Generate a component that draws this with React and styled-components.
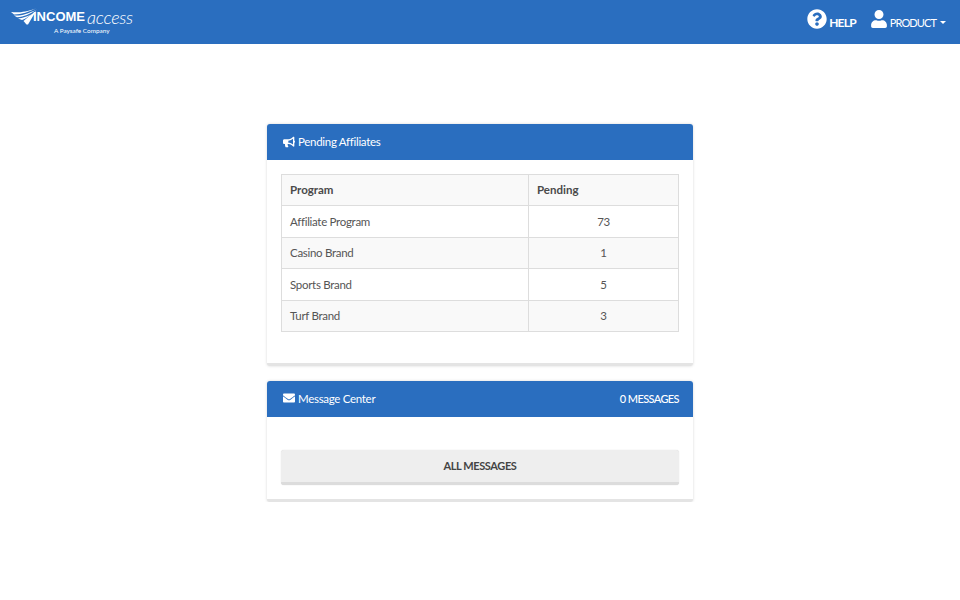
import React from 'react';
import styled, { createGlobalStyle } from 'styled-components';
import { FaQuestionCircle, FaUser, FaBullhorn, FaEnvelope } from 'react-icons/fa';

const Global = createGlobalStyle`
  html, body { margin: 0; padding: 0; background: #fff; }
  body { font-family: Lato, "Noto Sans", sans-serif; color: #555; }
`;

const Navbar = styled.header`
  height: 44px;
  background: #2a6ebf;
  display: flex;
  justify-content: space-between;
  align-items: flex-start;
  color: #fff;
`;

const Logo = styled.div`
  display: flex;
  flex-direction: column;
  padding: 7px 0 0 11px;
  width: 124px;
`;

const LogoTop = styled.div`
  display: flex;
  align-items: center;
  height: 19px;
  white-space: nowrap;
`;

const LogoBold = styled.span`
  font-family: "Liberation Sans", sans-serif;
  font-weight: 700;
  font-size: 13px;
  line-height: 14px;
  margin-left: -8px;
`;

const LogoThin = styled.span`
  font-style: italic;
  font-weight: 300;
  font-size: 18px;
  line-height: 18px;
  margin-left: 2px;
  letter-spacing: -0.3px;
`;

const LogoTag = styled.div`
  font-size: 6.4px;
  line-height: 9px;
  margin: 0 0 0 43px;
  white-space: nowrap;
`;

const NavLinks = styled.nav`
  display: flex;
  align-items: flex-start;
  gap: 14px;
  padding: 9px 14px 0 0;
`;

const NavItem = styled.div`
  display: flex;
  align-items: center;
  height: 20px;
  gap: 2px;
  font-size: ${({ $bold }) => ($bold ? 12 : 11)}px;
  font-weight: ${({ $bold }) => ($bold ? 700 : 400)};
  letter-spacing: ${({ $bold }) => ($bold ? -0.8 : -0.9)}px;
  svg { font-size: ${({ $icon }) => $icon}px; flex: none; }
  span { position: relative; top: 3px; }
`;

const Caret = styled.i`
  display: inline-block;
  width: 0;
  height: 0;
  margin: 6px 0 0 2px;
  border-top: 3.5px solid #fff;
  border-left: 3.5px solid transparent;
  border-right: 3.5px solid transparent;
`;

const Main = styled.main`
  width: 426px;
  margin: 80px auto 0;
  display: flex;
  flex-direction: column;
  gap: 15px;
`;

const Panel = styled.section`
  background: #fff;
  border-radius: 3px;
  box-shadow: 0 0 3px rgba(0, 0, 0, 0.16);
  border-bottom: 3px solid #e4e4e4;
`;

const PanelHead = styled.div`
  height: 36px;
  box-sizing: border-box;
  background: #2a6ebf;
  border-radius: 3px 3px 0 0;
  color: #fff;
  display: flex;
  align-items: center;
  justify-content: space-between;
  padding: 0 14px 1px 16px;
  font-size: 11.5px;
  letter-spacing: -0.3px;
`;

const HeadTitle = styled.div`
  display: flex;
  align-items: center;
  gap: 3px;
  svg { font-size: 12px; }
`;

const MessageCount = styled.span`
  font-size: 11px;
  font-weight: 500;
  letter-spacing: -0.6px;
`;

const PanelBody = styled.div`
  padding: ${({ $top }) => $top}px 14px ${({ $bottom }) => $bottom}px;
`;

const Table = styled.table`
  width: 100%;
  border-collapse: collapse;
  table-layout: fixed;
  font-size: 11.5px;
  letter-spacing: -0.3px;
`;

const Row = styled.tr`
  height: 31.5px;
  background: ${({ $striped }) => ($striped ? '#f9f9f9' : '#fff')};
`;

const Head = styled.th`
  border: 1px solid #ddd;
  padding: 0 8px;
  text-align: left;
  font-weight: 700;
  letter-spacing: 0;
  color: #4a4a4a;
  width: ${({ $w }) => $w || 'auto'};
`;

const Cell = styled.td`
  border: 1px solid #ddd;
  padding: 0 8px;
  text-align: ${({ $center }) => ($center ? 'center' : 'left')};
`;

const WideButton = styled.button`
  display: block;
  width: 100%;
  height: 35px;
  border: 0;
  border-bottom: 3px solid #dcdcdc;
  border-radius: 3px;
  background: #eee;
  box-shadow: 0 0 1px rgba(0, 0, 0, 0.2);
  color: #444;
  font-family: inherit;
  font-size: 11px;
  font-weight: 700;
  letter-spacing: -0.4px;
  padding: 0;
`;

const rows = [
  ['Affiliate Program', 73],
  ['Casino Brand', 1],
  ['Sports Brand', 5],
  ['Turf Brand', 3],
];

const Wing = () => (
  <svg width="30" height="17" viewBox="0 0 30 17" fill="#fff">
    <path d="M0 4C8 5 14 4 25 0.5C18 4 10 6.5 3 6.4Z" />
    <path d="M3 7.4C10 8 16 6 26 1.5C19 6 13 9 6 9.2Z" />
    <path d="M7 10.4C12 10.2 16 8.5 20 6.5C17 9 14.5 11 11 12Z" />
    <path d="M12.5 13L18 8.2L25 3L17 16.5H15.5Z" />
  </svg>
);

export default function App() {
  return (
    <>
      <Global />
      <Navbar>
        <Logo>
          <LogoTop>
            <Wing />
            <LogoBold>INCOME</LogoBold>
            <LogoThin>access</LogoThin>
          </LogoTop>
          <LogoTag>A Paysafe Company</LogoTag>
        </Logo>
        <NavLinks>
          <NavItem $bold $icon={20}>
            <FaQuestionCircle />
            <span>HELP</span>
          </NavItem>
          <NavItem $icon={18}>
            <FaUser />
            <span>PRODUCT</span>
            <Caret />
          </NavItem>
        </NavLinks>
      </Navbar>
      <Main>
        <Panel>
          <PanelHead>
            <HeadTitle>
              <FaBullhorn />
              Pending Affiliates
            </HeadTitle>
          </PanelHead>
          <PanelBody $top={13.5} $bottom={30.5}>
            <Table>
              <thead>
                <Row $striped>
                  <Head $w="230px">Program</Head>
                  <Head>Pending</Head>
                </Row>
              </thead>
              <tbody>
                {rows.map(([name, count], i) => (
                  <Row key={name} $striped={i % 2 === 1}>
                    <Cell>{name}</Cell>
                    <Cell $center>{count}</Cell>
                  </Row>
                ))}
              </tbody>
            </Table>
          </PanelBody>
        </Panel>
        <Panel>
          <PanelHead>
            <HeadTitle>
              <FaEnvelope />
              Message Center
            </HeadTitle>
            <MessageCount>0 MESSAGES</MessageCount>
          </PanelHead>
          <PanelBody $top={33} $bottom={14}>
            <WideButton>ALL MESSAGES</WideButton>
          </PanelBody>
        </Panel>
      </Main>
    </>
  );
}
